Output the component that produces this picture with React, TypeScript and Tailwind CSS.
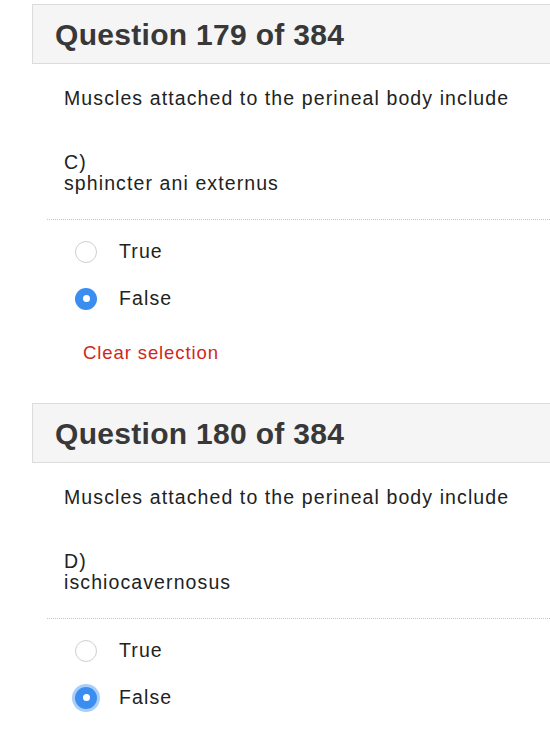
import React from "react";

type Question = {
  number: number;
  letter: string;
  answer: string;
  selected: "True" | "False" | null;
  focused?: boolean;
  showClear?: boolean;
};

const questions: Question[] = [
  { number: 179, letter: "C)", answer: "sphincter ani externus", selected: "False", showClear: true },
  { number: 180, letter: "D)", answer: "ischiocavernosus", selected: "False", focused: true },
];

function Radio({ checked, focused }: { checked: boolean; focused?: boolean }) {
  if (checked) {
    return (
      <span
        className={
          "flex h-[22px] w-[22px] items-center justify-center rounded-full bg-[#3b8ef0] " +
          (focused ? "ring-[3px] ring-[#a9cff8]" : "")
        }
      >
        <span className="h-[7px] w-[7px] rounded-full bg-white" />
      </span>
    );
  }
  return <span className="h-[22px] w-[22px] rounded-full border-[1.5px] border-[#cfcfcf] bg-white" />;
}

function QuestionBlock({ q }: { q: Question }) {
  return (
    <div className="pb-[39px]">
      <div className="-mr-6 flex h-[60px] items-center border border-[#dcdcdc] bg-[#f5f5f5] pl-[22px]">
        <h2 className="text-[30px] font-bold tracking-[0.3px] text-[#383838]">
          Question {q.number} of 384
        </h2>
      </div>
      <div className="pl-[32px] text-[19.5px] tracking-[1.1px] text-[#222]">
        <p className="mt-[22px] leading-[24px]">Muscles attached to the perineal body include</p>
        <div className="mt-[42px] leading-[21px]">
          <div>{q.letter}</div>
          <div>{q.answer}</div>
        </div>
      </div>
      <div className="-mr-6 ml-[15px] mt-[25px] border-t border-dotted border-[#c4c4c4]" />
      <div className="mt-[8px] pl-[43px]">
        {(["True", "False"] as const).map((opt) => (
          <div key={opt} className="flex h-[47px] items-center gap-[22px]">
            <Radio checked={q.selected === opt} focused={q.focused} />
            <span className="text-[19.5px] tracking-[1.1px] text-[#222]">{opt}</span>
          </div>
        ))}
      </div>
      {q.showClear && (
        <div className="ml-[51px] mt-[20px] text-[18.5px] leading-[22px] tracking-[0.9px] text-[#d0281b]">
          Clear selection
        </div>
      )}
    </div>
  );
}

export default function App() {
  return (
    <div
      className="h-[736px] w-[550px] overflow-hidden bg-white pl-[32px] pt-[4px]"
      style={{ fontFamily: '"Liberation Sans", Arial, sans-serif' }}
    >
      {questions.map((q) => (
        <QuestionBlock key={q.number} q={q} />
      ))}
    </div>
  );
}
